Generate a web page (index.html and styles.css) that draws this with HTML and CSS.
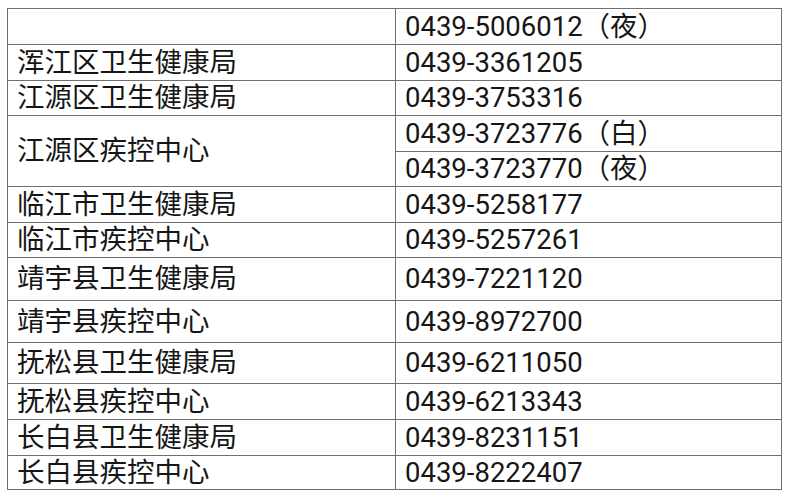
FILE: index.html
```html
<!DOCTYPE html>
<html lang="zh-CN">
<head>
<meta charset="utf-8">
<link rel="stylesheet" href="styles.css">
</head>
<body>
<table class="tbl">
  <colgroup><col class="c1"><col class="c2"></colgroup>
  <tr class="h36"><td></td><td>0439-5006012（夜）</td></tr>
  <tr class="h36"><td>浑江区卫生健康局</td><td>0439-3361205</td></tr>
  <tr class="h35"><td>江源区卫生健康局</td><td>0439-3753316</td></tr>
  <tr class="h36"><td rowspan="2">江源区疾控中心</td><td>0439-3723776（白）</td></tr>
  <tr class="h35"><td>0439-3723770（夜）</td></tr>
  <tr class="h36"><td>临江市卫生健康局</td><td>0439-5258177</td></tr>
  <tr class="h35"><td>临江市疾控中心</td><td>0439-5257261</td></tr>
  <tr class="h43"><td>靖宇县卫生健康局</td><td>0439-7221120</td></tr>
  <tr class="h42"><td>靖宇县疾控中心</td><td>0439-8972700</td></tr>
  <tr class="h41"><td>抚松县卫生健康局</td><td>0439-6211050</td></tr>
  <tr class="h36"><td>抚松县疾控中心</td><td>0439-6213343</td></tr>
  <tr class="h36"><td>长白县卫生健康局</td><td>0439-8231151</td></tr>
  <tr class="h34"><td>长白县疾控中心</td><td>0439-8222407</td></tr>
</table>
</body>
</html>
```
FILE: styles.css
```css
html, body {
  margin: 0;
  background: #ffffff;
}
body {
  padding: 8px 0 0 7px;
  font-family: Roboto, "Noto Sans CJK SC", sans-serif;
  color: #161616;
}
.tbl {
  border-collapse: collapse;
  table-layout: fixed;
  width: 774px;
}
.c1 { width: 388px; }
.c2 { width: 386px; }
.tbl td {
  border: 1.5px solid #707070;
  padding: 0 0 0 9px;
  font-size: 27.5px;
  line-height: 30px;
  vertical-align: middle;
  white-space: nowrap;
}
.h34 { height: 34px; }
.h35 { height: 35px; }
.h36 { height: 36px; }
.h41 { height: 41px; }
.h42 { height: 42px; }
.h43 { height: 43px; }
```
